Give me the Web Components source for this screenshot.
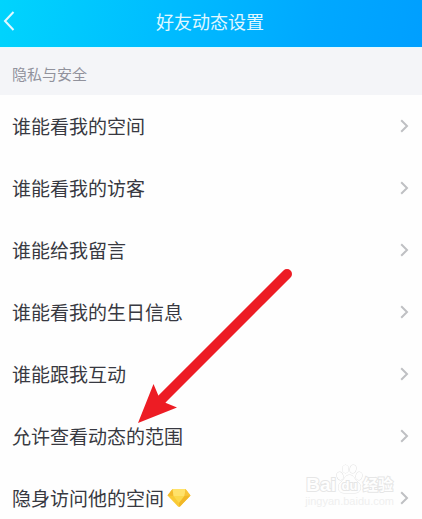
<!DOCTYPE html>
<html lang="zh-CN">
<head>
<meta charset="utf-8">
<meta name="viewport" content="width=device-width, initial-scale=1">
<title>好友动态设置</title>
<style>
  body {
    margin: 0;
    background: #fefefe;
    color: #383941;
    font-family: "Noto Sans CJK SC", sans-serif;
  }
</style>
</head>
<body>
<settings-page>
  <nav-header slot="header">好友动态设置</nav-header>
  <settings-group label="隐私与安全">
    <settings-row>谁能看我的空间</settings-row>
    <settings-row>谁能看我的访客</settings-row>
    <settings-row>谁能给我留言</settings-row>
    <settings-row>谁能看我的生日信息</settings-row>
    <settings-row>谁能跟我互动</settings-row>
    <settings-row>允许查看动态的范围</settings-row>
    <settings-row>隐身访问他的空间<gem-badge slot="badge"></gem-badge></settings-row>
  </settings-group>
  <pointer-arrow slot="overlay"></pointer-arrow>
  <site-watermark slot="overlay"></site-watermark>
</settings-page>

<script>
class BaseElement extends HTMLElement {
  connectedCallback() {
    if (this.shadowRoot) return;
    this.attachShadow({ mode: "open" });
    this.shadowRoot.innerHTML = this.template();
  }
}

class SettingsPage extends BaseElement {
  template() {
    return `
      <style>
        :host {
          position: relative;
          display: flex;
          flex-direction: column;
          height: 100vh;
          overflow: hidden;
        }
        main {
          flex: 1;
          min-height: 0;
          overflow-y: auto;
          scrollbar-width: none;
        }
      </style>
      <slot name="header"></slot>
      <main><slot></slot></main>
      <slot name="overlay"></slot>
    `;
  }
}

class NavHeader extends BaseElement {
  template() {
    return `
      <style>
        :host {
          display: grid;
          grid-template-columns: 32px 1fr 34px;
          align-items: center;
          height: 47px;
          flex: none;
          padding-bottom: 6px;
          box-sizing: border-box;
          background: linear-gradient(100deg, #00d4fd 0%, #00bdff 38%, #00a8ff 75%, #009fff 100%);
          color: #e0f8ff;
        }
        button {
          display: flex;
          align-items: center;
          height: 40px;
          padding: 0 0 0 3px;
          border: 0;
          background: none;
          color: inherit;
          cursor: pointer;
        }
        svg {
          fill: none;
          stroke: currentColor;
          stroke-width: 2;
        }
        h1 {
          margin: 0;
          text-align: center;
          font-size: 18px;
          line-height: 26px;
          font-weight: 400;
        }
      </style>
      <button type="button" aria-label="返回">
        <svg width="12" height="20" viewBox="0 0 12 20" aria-hidden="true">
          <path d="M10.500 1L2 10L10.500 19"></path>
        </svg>
      </button>
      <h1><slot></slot></h1>
    `;
  }
}

class SettingsGroup extends BaseElement {
  template() {
    return `
      <style>
        :host { display: block; }
        h2 {
          margin: 0;
          padding: 4px 12px 0;
          border-top: 1px solid #e5fbff;
          background: #f4f5f8;
          color: #91929c;
          font-size: 15px;
          line-height: 43px;
          font-weight: 400;
        }
      </style>
      <h2>${this.getAttribute("label")}</h2>
      <slot></slot>
    `;
  }
}

class SettingsRow extends BaseElement {
  template() {
    return `
      <style>
        :host { display: block; }
        a {
          display: flex;
          align-items: center;
          gap: 8px;
          height: 62px;
          padding: 0 13px 0 12px;
          color: inherit;
          font-size: 19px;
          line-height: 28px;
          text-decoration: none;
        }
        .text {
          display: flex;
          align-items: center;
          flex: 1;
          gap: 3px;
        }
        svg {
          fill: none;
          stroke: #bfc0c3;
          stroke-width: 2;
        }
      </style>
      <a href="#">
        <span class="text"><slot></slot><slot name="badge"></slot></span>
        <svg width="9" height="14" viewBox="0 0 9 14" aria-hidden="true">
          <path d="M1.2 1.2L7 7L1.2 12.8"></path>
        </svg>
      </a>
    `;
  }
}

class GemBadge extends BaseElement {
  template() {
    return `
      <style>
        :host { display: flex; }
      </style>
      <svg width="24" height="20" viewBox="0 0 24 20" aria-hidden="true">
        <path d="M5.5 1H18.5L23.5 7.5L13 18.6Q12 19.4 11 18.6L.5 7.5Z" fill="#f9ca35"></path>
        <path d="M5.5 1L.5 7.5L6.5 8Z" fill="#f3ba2c"></path>
        <path d="M5.5 1H18.5L17.5 8H6.5Z" fill="#ffe26a"></path>
        <path d="M18.5 1L23.5 7.5L17.5 8Z" fill="#f7c43a"></path>
        <path d="M6.5 8H17.5L12 15Z" fill="#fbd94c"></path>
        <path d="M17.5 8L23.5 7.5L13 18.6Q12 19.4 12 15Z" fill="#f1b727"></path>
      </svg>
    `;
  }
}

class PointerArrow extends BaseElement {
  template() {
    return `
      <style>
        :host {
          position: absolute;
          top: 267px;
          left: 138px;
          pointer-events: none;
        }
        svg { display: block; }
      </style>
      <svg width="156" height="156" viewBox="0 0 156 156" aria-hidden="true">
        <path d="M149 7L22 134" stroke="#ed1c24" stroke-width="10" stroke-linecap="round"></path>
        <path d="M0 156L15.500 117L21 130L28 136L39 140.500Z" fill="#ed1c24"></path>
      </svg>
    `;
  }
}

class SiteWatermark extends BaseElement {
  template() {
    return `
      <style>
        :host {
          position: absolute;
          right: 28px;
          bottom: 11px;
          display: flex;
          flex-direction: column;
          align-items: center;
          color: #fefefe;
          font-family: "Liberation Sans", "Noto Sans CJK SC", sans-serif;
          pointer-events: none;
        }
        .brand {
          display: flex;
          align-items: flex-end;
          font-size: 19px;
          line-height: 20px;
          font-weight: 700;
          -webkit-text-stroke: 2px #e6e6e6;
          paint-order: stroke fill;
        }
        .cn { font-size: 15px; }
        .paw {
          display: grid;
          place-items: end center;
          width: 27px;
          height: 31px;
        }
        .paw > * { grid-area: 1 / 1; }
        .paw span {
          font-size: 13px;
          line-height: 18px;
        }
        svg {
          fill: #fefefe;
          stroke: #e2e2e2;
        }
        .url {
          color: #efefef;
          font-size: 11px;
          line-height: 13px;
        }
      </style>
      <div class="brand">
        <span>Bai</span>
        <span class="paw">
          <svg width="27" height="31" viewBox="0 0 27 31" aria-hidden="true">
            <ellipse cx="4" cy="12" rx="3" ry="4" transform="rotate(-20 4 12)"></ellipse>
            <ellipse cx="9.500" cy="5" rx="3" ry="4"></ellipse>
            <ellipse cx="17" cy="5" rx="3" ry="4" transform="rotate(12 17 5)"></ellipse>
            <ellipse cx="23" cy="12" rx="3" ry="4" transform="rotate(15 23 12)"></ellipse>
            <path d="M13.500 11C9 11 9 15 6 17.500C1 20 1 29 8 29H19C26 29 26 20 21 17.500C18 15 18 11 13.500 11Z"></path>
          </svg>
          <span>du</span>
        </span>
        <span class="cn">经验</span>
      </div>
      <div class="url">jingyan.baidu.com</div>
    `;
  }
}

customElements.define("settings-page", SettingsPage);
customElements.define("nav-header", NavHeader);
customElements.define("settings-group", SettingsGroup);
customElements.define("settings-row", SettingsRow);
customElements.define("gem-badge", GemBadge);
customElements.define("pointer-arrow", PointerArrow);
customElements.define("site-watermark", SiteWatermark);
</script>
</body>
</html>
